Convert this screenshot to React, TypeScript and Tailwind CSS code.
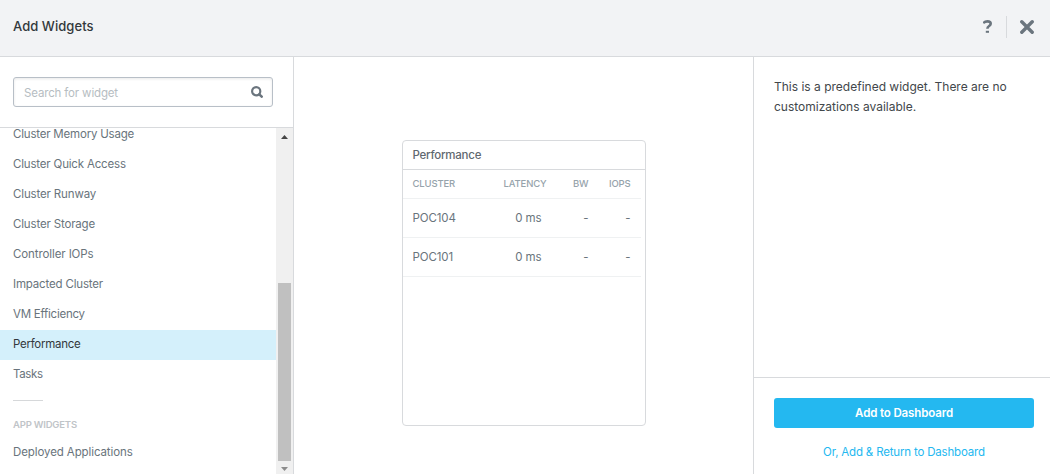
const widgets = [
  { name: "Cluster Memory Usage", track: "tracking-[-0.2px]" },
  { name: "Cluster Quick Access", track: "tracking-[-0.18px]" },
  { name: "Cluster Runway", track: "tracking-[-0.14px]" },
  { name: "Cluster Storage", track: "tracking-[-0.16px]" },
  { name: "Controller IOPs", track: "tracking-[-0.1px]" },
  { name: "Impacted Cluster", track: "tracking-[-0.17px]" },
  { name: "VM Efficiency", track: "tracking-[-0.25px]" },
  { name: "Performance", track: "tracking-[-0.27px]" },
  { name: "Tasks", track: "tracking-[-0.35px]" },
];

const rows = ["POC104", "POC101"];

function Header() {
  return (
    <header className="flex h-[57px] shrink-0 items-start justify-between border-b border-[#d8dadd] bg-[#f2f3f5] pl-[13px] pr-4 pt-4">
      <h1 className="text-[13px] font-medium leading-[20px] tracking-[0.05px] text-[#33383c]">Add Widgets</h1>
      <div className="flex h-[22px] items-center">
        <svg className="-mt-px h-[13px] w-[9px]" viewBox="0 0 9 13" fill="none" stroke="#6b757e" strokeWidth="2.6">
          <path d="M.5 3.4C1.5.8 7.7.4 7.7 3.8c0 2.5-3.3 2-3.3 5" />
          <path d="M2.8 11.8h3.2" strokeWidth="2" />
        </svg>
        <div className="ml-[14px] mr-[13px] h-[22px] w-px bg-[#d8dadd]" />
        <svg className="h-[14px] w-[14px]" viewBox="0 0 14 14" stroke="#6b757e" strokeWidth="3.4" strokeLinecap="round">
          <path d="M1.8 1.8l10.4 10.4M12.2 1.8L1.8 12.2" />
        </svg>
      </div>
    </header>
  );
}

function Sidebar() {
  return (
    <aside className="flex w-[294px] shrink-0 flex-col border-r border-[#d8dadd]">
      <div className="h-[71px] shrink-0 border-b border-[#d8dadd] pl-[13px] pt-5">
        <div className="flex h-[30px] w-[260px] items-center justify-between rounded-[3px] border border-[#b8bfc7] pl-[10px] pr-[9px] shadow-[inset_0_1px_3px_rgba(0,0,0,0.09)]">
          <span className="pt-[2px] text-[11.5px] leading-5 tracking-[-0.15px] text-[#b6bdc2]">Search for widget</span>
          <svg className="h-3 w-3" viewBox="0 0 12 12" fill="none" stroke="#6b757e">
            <circle cx="5.2" cy="5.2" r="4.1" strokeWidth="2.2" />
            <path d="M8.3 8.3l2.4 2.4" strokeWidth="2.5" strokeLinecap="round" />
          </svg>
        </div>
      </div>
      <div className="flex min-h-0 flex-1">
        <div className="min-w-0 flex-1 overflow-hidden">
          <ul className="-mt-2">
            {widgets.map(({ name, track }) => (
              <li
                key={name}
                className={`h-[30px] whitespace-nowrap pl-[13px] text-[11.5px] leading-[29px] ${track} ${
                  name === "Performance" ? "bg-[#d4f0fb] text-[#33383c]" : "text-[#69747c]"
                }`}
              >
                {name}
              </li>
            ))}
          </ul>
          <div className="ml-[13px] mt-[10px] h-px w-[30px] bg-[#d6d8da]" />
          <div className="mt-[14px] pl-[13px] text-[9.5px] font-semibold leading-5 tracking-[-0.2px] text-[#bfc4c8]">APP WIDGETS</div>
          <div className="mt-[3px] pl-[13px] text-[11.5px] leading-[29px] tracking-[-0.1px] text-[#69747c]">Deployed Applications</div>
        </div>
        <div className="flex w-[17px] shrink-0 flex-col items-center bg-[#f0f0f0]">
          <svg className="mt-[7px] h-1 w-[7px]" viewBox="0 0 7 4">
            <path d="M0 4L3.5 0 7 4z" fill="#454545" />
          </svg>
          <div className="mt-[144px] h-[178px] w-[13px] bg-[#c0c0c0]" />
          <svg className="mt-[6px] h-1 w-[7px]" viewBox="0 0 7 4">
            <path d="M0 0h7L3.5 4z" fill="#8c8c8c" />
          </svg>
        </div>
      </div>
    </aside>
  );
}

function Preview() {
  return (
    <main className="flex min-w-0 flex-1 justify-center pt-[83px]">
      <section className="h-[286px] w-[244px] rounded-[4px] border border-[#d8dadd]">
        <h2 className="h-[29px] border-b border-[#d8dadd] pl-[10px] text-[11.5px] font-medium leading-[29px] tracking-[-0.24px] text-[#5f686f]">Performance</h2>
        <div className="mr-1">
          <div className="grid h-[29px] grid-cols-[76px_58px_42px_42px] border-b border-[#eff1f2] pl-[10px] text-[9.5px] font-medium leading-[27px] tracking-[-0.15px] text-[#96a3ab]">
            <span>CLUSTER</span>
            <span className="text-right">LATENCY</span>
            <span className="text-right">BW</span>
            <span className="text-right">IOPS</span>
          </div>
          {rows.map((name) => (
            <div key={name} className="grid h-[39px] grid-cols-[76px_53px_47px_42px] border-b border-[#eff1f2] pl-[10px] text-[11.5px] leading-[39px] tracking-[-0.1px] text-[#69747c]">
              <span>{name}</span>
              <span className="text-right">0 ms</span>
              <span className="text-right">-</span>
              <span className="text-right">-</span>
            </div>
          ))}
        </div>
      </section>
    </main>
  );
}

function Options() {
  return (
    <aside className="flex w-[297px] shrink-0 flex-col border-l border-[#d8dadd]">
      <p className="flex-1 whitespace-nowrap pl-5 pt-5 text-[12px] leading-5 text-[#42474b]">
        This is a predefined widget. There are no
        <br />
        customizations available.
      </p>
      <div className="flex h-[97px] shrink-0 flex-col border-t border-[#d8dadd] pl-5 pr-4 pt-5">
        <button className="h-[30px] w-[260px] rounded-[3px] bg-[#24b8f0] pb-px text-[11.5px] font-semibold leading-[28px] tracking-[-0.13px] text-white">Add to Dashboard</button>
        <button className="mt-[14px] h-5 w-[260px] text-[11.5px] leading-5 tracking-[-0.18px] text-[#24b8f0]">Or, Add &amp; Return to Dashboard</button>
      </div>
    </aside>
  );
}

export default function App() {
  return (
    <div className="flex h-[474px] w-[1050px] flex-col overflow-hidden bg-white font-['Inter',sans-serif]">
      <Header />
      <div className="flex min-h-0 flex-1">
        <Sidebar />
        <Preview />
        <Options />
      </div>
    </div>
  );
}
